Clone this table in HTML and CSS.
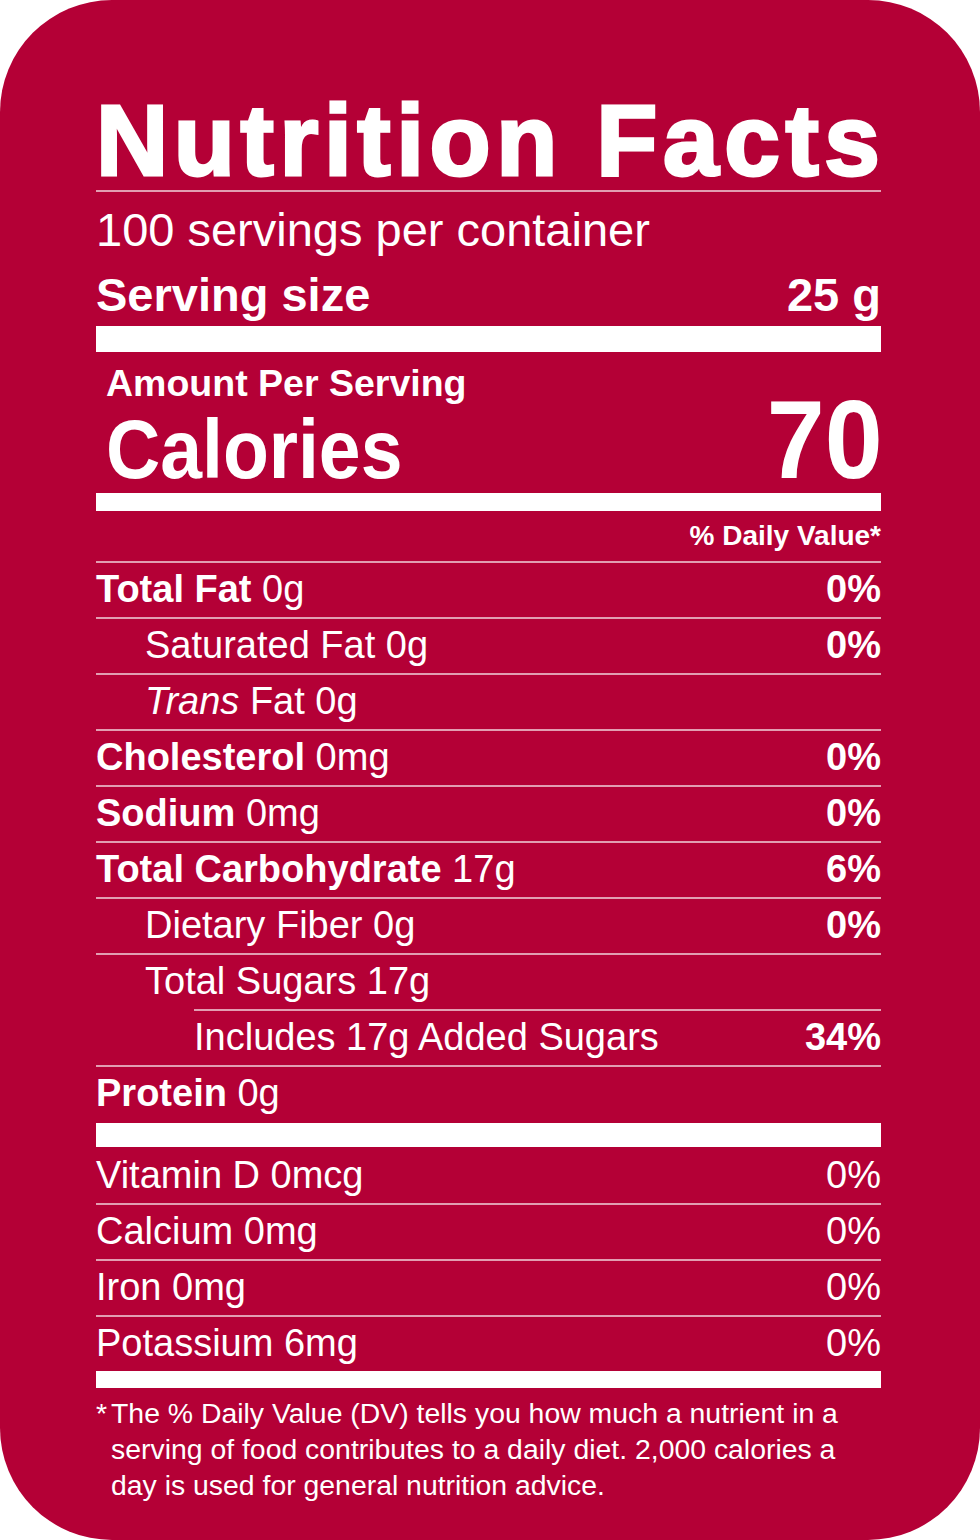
FILE: index.html
```html
<!DOCTYPE html>
<html lang="en">
<head>
<meta charset="utf-8">
<title>Nutrition Facts</title>
<link rel="stylesheet" href="styles.css">
</head>
<body>
<div class="label">
  <h1 class="title">Nutrition Facts</h1>
  <div class="servings">100 servings per container</div>
  <div class="size-row"><span>Serving size</span><span>25 g</span></div>
  <div class="bar bar-lg"></div>
  <div class="amount">Amount Per Serving</div>
  <div class="cal-row"><span class="cal-label">Calories</span><span class="cal-value">70</span></div>
  <div class="bar bar-md"></div>
  <div class="dv-head">% Daily Value*</div>

  <div class="row"><span><b>Total Fat</b> 0g</span><b>0%</b></div>
  <div class="row"><span class="sub">Saturated Fat 0g</span><b>0%</b></div>
  <div class="row"><span class="sub"><i>Trans</i> Fat 0g</span></div>
  <div class="row"><span><b>Cholesterol</b> 0mg</span><b>0%</b></div>
  <div class="row"><span><b>Sodium</b> 0mg</span><b>0%</b></div>
  <div class="row"><span><b>Total Carbohydrate</b> 17g</span><b>6%</b></div>
  <div class="row"><span class="sub">Dietary Fiber 0g</span><b>0%</b></div>
  <div class="row"><span class="sub">Total Sugars 17g</span></div>
  <div class="row row-sub2"><span>Includes 17g Added Sugars</span><b>34%</b></div>
  <div class="row row-end"><span><b>Protein</b> 0g</span></div>
  <div class="bar bar-sm"></div>

  <div class="row row-first"><span>Vitamin D 0mcg</span><span>0%</span></div>
  <div class="row"><span>Calcium 0mg</span><span>0%</span></div>
  <div class="row"><span>Iron 0mg</span><span>0%</span></div>
  <div class="row"><span>Potassium 6mg</span><span>0%</span></div>
  <div class="bar bar-xs"></div>

  <p class="foot"><span class="ast">*</span><span class="foot-text">The % Daily Value (DV) tells you how much a nutrient in a serving of food contributes to a daily diet. 2,000 calories a day is used for general nutrition advice.</span></p>
</div>
</body>
</html>
```

FILE: styles.css
```css
html, body {
  margin: 0;
  padding: 0;
  background: #ffffff;
}

.label {
  box-sizing: border-box;
  width: 980px;
  height: 1540px;
  padding: 90px 99px 0 96px;
  background: #b40036;
  border-radius: 112px;
  color: #ffffff;
  font-family: "Liberation Sans", Arial, sans-serif;
  overflow: hidden;
}

.title {
  margin: 0;
  font-size: 100px;
  line-height: 100px;
  font-weight: bold;
  letter-spacing: 5.6px;
  white-space: nowrap;
  -webkit-text-stroke: 3px #ffffff;
  border-bottom: 2px solid rgba(255, 255, 255, 0.62);
}

.servings {
  margin-top: 10px;
  font-size: 47px;
  line-height: 56px;
}

.size-row {
  margin-top: 9px;
  display: flex;
  justify-content: space-between;
  font-size: 47px;
  line-height: 56px;
  font-weight: bold;
}

.bar {
  background: #ffffff;
}
.bar-lg { margin-top: 3px; height: 26px; }
.bar-md { height: 18px; }
.bar-sm { height: 24px; }
.bar-xs { height: 17px; }

.amount {
  margin-top: 9px;
  padding-left: 10px;
  font-size: 37.5px;
  line-height: 44px;
  font-weight: bold;
}

.cal-row {
  height: 88px;
  display: flex;
  justify-content: space-between;
  align-items: baseline;
  padding-left: 10px;
  font-weight: bold;
}

.cal-label {
  display: inline-block;
  font-size: 83px;
  line-height: 70px;
  transform: scaleX(0.905);
  transform-origin: left center;
}

.cal-value {
  display: inline-block;
  margin-right: -2px;
  font-size: 112px;
  line-height: 70px;
  transform: scaleX(0.93);
  transform-origin: right center;
}

.dv-head {
  padding: 8px 0;
  text-align: right;
  font-size: 28px;
  line-height: 34px;
  font-weight: bold;
}

.row {
  display: flex;
  justify-content: space-between;
  border-top: 2px solid rgba(255, 255, 255, 0.62);
  padding-bottom: 2px;
  font-size: 38px;
  line-height: 52px;
  white-space: nowrap;
}

.row b {
  font-weight: bold;
}

.sub {
  padding-left: 49px;
}

.row-sub2 {
  margin-left: 98px;
}

.row-end {
  padding-bottom: 4px;
}

.row-first {
  border-top: 0;
  padding-top: 2px;
}

.foot {
  margin: 7px 0 0 0;
  display: flex;
  font-size: 28.4px;
  line-height: 36px;
}

.ast {
  flex: 0 0 15px;
}

.foot-text {
  max-width: 760px;
}
```
